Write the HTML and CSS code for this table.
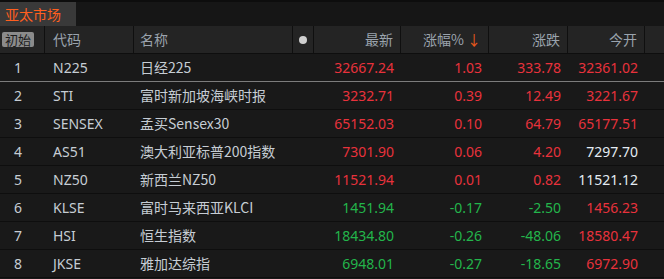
FILE: index.html
```html
<!DOCTYPE html>
<html lang="zh-CN">
<head>
<meta charset="utf-8">
<title>亚太市场</title>
<link rel="stylesheet" href="styles.css">
</head>
<body>
<div class="panel">
  <div class="tabbar">
    <div class="tab">亚太市场</div>
  </div>
  <div class="row head">
    <div class="c idx"><span class="btn">初始</span></div>
    <div class="c code">代码</div>
    <div class="c name">名称</div>
    <div class="c dotc"><span class="dot"></span></div>
    <div class="c num">最新</div>
    <div class="c num">涨幅% <span class="arrow">↓</span></div>
    <div class="c num">涨跌</div>
    <div class="c num">今开</div>
    <div class="c last"></div>
  </div>
  <div class="row sel">
    <div class="c idx">1</div><div class="c code">N225</div><div class="c name">日经225</div><div class="c dotc"></div>
    <div class="c num up">32667.24</div><div class="c num up">1.03</div><div class="c num up">333.78</div><div class="c num up">32361.02</div><div class="c last"></div>
  </div>
  <div class="row">
    <div class="c idx">2</div><div class="c code">STI</div><div class="c name">富时新加坡海峡时报</div><div class="c dotc"></div>
    <div class="c num up">3232.71</div><div class="c num up">0.39</div><div class="c num up">12.49</div><div class="c num up">3221.67</div><div class="c last"></div>
  </div>
  <div class="row">
    <div class="c idx">3</div><div class="c code">SENSEX</div><div class="c name">孟买Sensex30</div><div class="c dotc"></div>
    <div class="c num up">65152.03</div><div class="c num up">0.10</div><div class="c num up">64.79</div><div class="c num up">65177.51</div><div class="c last"></div>
  </div>
  <div class="row">
    <div class="c idx">4</div><div class="c code">AS51</div><div class="c name">澳大利亚标普200指数</div><div class="c dotc"></div>
    <div class="c num up">7301.90</div><div class="c num up">0.06</div><div class="c num up">4.20</div><div class="c num flat">7297.70</div><div class="c last"></div>
  </div>
  <div class="row">
    <div class="c idx">5</div><div class="c code">NZ50</div><div class="c name">新西兰NZ50</div><div class="c dotc"></div>
    <div class="c num up">11521.94</div><div class="c num up">0.01</div><div class="c num up">0.82</div><div class="c num flat">11521.12</div><div class="c last"></div>
  </div>
  <div class="row">
    <div class="c idx">6</div><div class="c code">KLSE</div><div class="c name">富时马来西亚KLCI</div><div class="c dotc"></div>
    <div class="c num down">1451.94</div><div class="c num down">-0.17</div><div class="c num down">-2.50</div><div class="c num up">1456.23</div><div class="c last"></div>
  </div>
  <div class="row">
    <div class="c idx">7</div><div class="c code">HSI</div><div class="c name">恒生指数</div><div class="c dotc"></div>
    <div class="c num down">18434.80</div><div class="c num down">-0.26</div><div class="c num down">-48.06</div><div class="c num up">18580.47</div><div class="c last"></div>
  </div>
  <div class="row">
    <div class="c idx">8</div><div class="c code">JKSE</div><div class="c name">雅加达综指</div><div class="c dotc"></div>
    <div class="c num down">6948.01</div><div class="c num down">-0.27</div><div class="c num down">-18.65</div><div class="c num up">6972.90</div><div class="c last"></div>
  </div>
</div>
</body>
</html>
```
FILE: styles.css
```css
html, body {
  margin: 0;
  padding: 0;
  background: #161616;
}
.panel {
  width: 664px;
  height: 279px;
  overflow: hidden;
  font-family: "Noto Sans", "Noto Sans CJK SC", sans-serif;
  font-size: 14px;
  background: #181818;
}
.tabbar {
  height: 24px;
  border-top: 2px solid #0d0d0d;
  background: #161616;
  display: flex;
}
.tab {
  width: 76px;
  background: #393939;
  color: #ff5f1f;
  line-height: 24px;
  padding-left: 5px;
  box-sizing: border-box;
  font-family: "Noto Sans CJK SC", sans-serif;
}
.row {
  display: grid;
  grid-template-columns: 45px 89px 159px 21px 87px 88px 79px 77px 1fr;
  height: 27px;
  border-bottom: 1px solid #0e0e0e;
  background: #191919;
  color: #c6cdd4;
}
.row.sel {
  border-bottom-color: #7c7c7c;
}
.row.head {
  background: #242424;
  color: #9aa3ad;
  border-bottom-color: #0e0e0e;
}
.c {
  line-height: 27px;
  white-space: nowrap;
  overflow: hidden;
}
.head .c {
  border-right: 1px solid #0f0f0f;
}
.head .c.last {
  border-right: none;
}
.idx {
  padding-left: 14px;
}
.head .idx {
  padding-left: 2px;
  display: flex;
  align-items: center;
}
.btn {
  display: inline-block;
  background: #8b8b8b;
  color: #1c1c1c;
  font-size: 13px;
  line-height: 15px;
  padding: 0 3px;
  border-radius: 2px;
  font-family: "Noto Sans CJK SC", sans-serif;
}
.code {
  padding-left: 8px;
}
.name {
  padding-left: 6px;
  font-family: "Noto Sans CJK SC", sans-serif;
}
.head .code, .head .num {
  font-family: "Noto Sans CJK SC", sans-serif;
}
.dotc {
  display: flex;
  align-items: center;
  justify-content: center;
}
.dot {
  width: 8px;
  height: 8px;
  border-radius: 50%;
  background: #cfcfcf;
}
.num {
  text-align: right;
  padding-right: 7px;
}
.arrow {
  color: #e8581c;
}
.up { color: #e8323c; }
.down { color: #23b54b; }
.flat { color: #e4ecf3; }
```
